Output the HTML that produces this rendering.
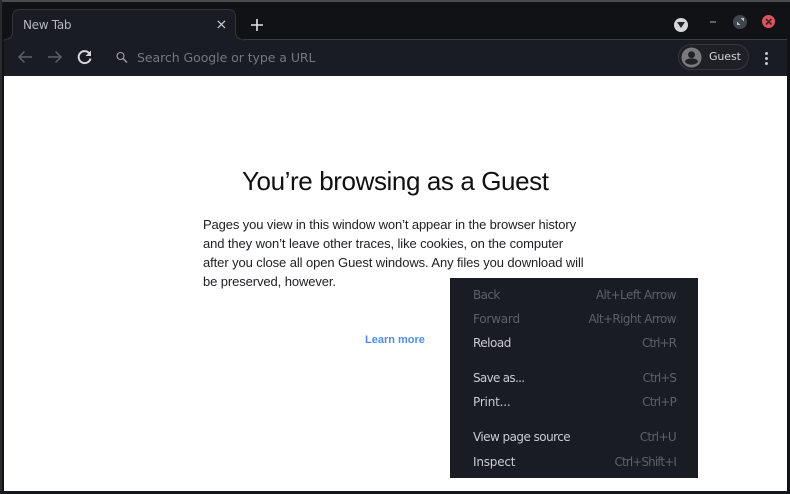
<!DOCTYPE html>
<html><head><meta charset="utf-8">
<style>
html,body{margin:0;padding:0;background:#0f1014;}
#w{position:relative;width:790px;height:494px;overflow:hidden;background:#111216;font-family:"DejaVu Sans","Liberation Sans",sans-serif;}
.a{position:absolute;white-space:nowrap;}
.r{font-family:"Liberation Sans",sans-serif;color:#202124;font-size:13px;line-height:19px;left:203px;letter-spacing:-.1px;}
.m{font-size:12px;line-height:16px;color:#c9cbd0;left:473px;letter-spacing:-.35px;}
.d{color:#5d6066;}
.k{font-size:12px;line-height:16px;color:#5d6066;right:114px;letter-spacing:-.5px;}
</style></head><body>
<div id="w">
<div class="a" style="left:0;top:0;width:790px;height:2px;background:#4a4b4d"></div>
<div class="a" style="left:0;top:0;width:2px;height:494px;background:#2a2b2e"></div>
<div class="a" style="left:0;top:491px;width:790px;height:3px;background:#17181b"></div>
<!-- toolbar -->
<div class="a" style="left:4px;top:39px;width:783px;height:37px;background:#1a1c23"></div>
<div class="a" style="left:240px;top:39px;width:547px;height:1px;background:#3a3b40"></div>
<div class="a" style="left:4px;top:39px;width:9px;height:1px;background:#3a3b40"></div>
<!-- tab -->
<svg class="a" style="left:4px;top:8px" width="240" height="33">
<path d="M0 31.5C6 31.5 8.500 29 8.500 24V9C8.500 4 11 1.500 16 1.500H224C229 1.500 231.500 4 231.500 9V24C231.500 29 234 31.500 240 31.500V33H0Z" fill="#1a1c23" stroke="#33353b" stroke-width="1"/>
<rect x="1" y="31.500" width="238" height="2" fill="#1a1c23"/>
</svg>
<div class="a" style="left:23px;top:17px;font-size:12px;line-height:16px;color:#b4b6bb;letter-spacing:-.3px">New Tab</div>
<svg class="a" style="left:216px;top:19px" width="11" height="11"><path d="M1.800 1.800L9 9M9 1.800L1.800 9" stroke="#d0d1d4" stroke-width="1.200"/></svg>
<svg class="a" style="left:250px;top:18px" width="14" height="14"><path d="M7 1V13M1 7H13" stroke="#e3e4e6" stroke-width="1.600"/></svg>
<!-- nav -->
<svg class="a" style="left:16px;top:49px" width="18" height="16"><path d="M16 8H3M8.500 2.500L3 8L8.500 13.500" fill="none" stroke="#5e6066" stroke-width="1.500"/></svg>
<svg class="a" style="left:46px;top:49px" width="18" height="16"><path d="M2 8H15M9.500 2.500L15 8L9.500 13.500" fill="none" stroke="#5e6066" stroke-width="1.500"/></svg>
<svg class="a" style="left:76px;top:49px" width="17" height="16"><path d="M13.300 4.300A6 6 0 1 0 14.500 9.500" fill="none" stroke="#d5d6d9" stroke-width="2"/><path d="M15 1.500V7H9.500Z" fill="#d5d6d9"/></svg>
<svg class="a" style="left:115px;top:51px" width="14" height="14"><circle cx="5.500" cy="5" r="3.500" fill="none" stroke="#a0a2a7" stroke-width="1.100"/><path d="M8 7.500L12 11.500" stroke="#a0a2a7" stroke-width="1.300"/></svg>
<div class="a" style="left:137px;top:50px;font-size:12.500px;line-height:16px;color:#75777d;letter-spacing:-.06px">Search Google or type a URL</div>
<!-- window buttons -->
<div class="a" style="left:674px;top:18px;width:14px;height:14px;border-radius:50%;background:#d6d7d9"></div>
<svg class="a" style="left:677px;top:22px" width="8" height="6"><path d="M0 0H8L4 6Z" fill="#22242a"/></svg>
<div class="a" style="left:710px;top:21px;width:6px;height:2px;background:#5d6068"></div>
<div class="a" style="left:733px;top:15px;width:14px;height:14px;border-radius:50%;background:#41454e"></div>
<svg class="a" style="left:736px;top:17px" width="9" height="9"><path d="M1 8V4.500L4.500 8ZM8 1V4.500L4.500 1Z" fill="#c0c2c6"/></svg>
<div class="a" style="left:762px;top:15px;width:13px;height:13px;border-radius:50%;background:#e0525f"></div>
<svg class="a" style="left:765px;top:18px" width="8" height="8"><path d="M1 1L6.500 6.500M6.500 1L1 6.500" stroke="#35232a" stroke-width="1.600"/></svg>
<!-- guest -->
<div class="a" style="left:678px;top:44px;width:69px;height:24px;border:1px solid #34363b;border-radius:14px;background:#1e2025"></div>
<svg class="a" style="left:681px;top:47px" width="21" height="21" viewBox="0 0 22 22"><circle cx="11" cy="11" r="10.500" fill="#77797c"/><circle cx="11" cy="8" r="3.600" fill="#202226"/><path d="M4 15.500C5 12.500 8 12 11 12C14 12 17 12.500 18 15.500C16.500 17.500 14 18.500 11 18.500C8 18.500 5.500 17.500 4 15.500Z" fill="#202226"/></svg>
<div class="a" style="left:709px;top:49px;font-size:11px;line-height:16px;color:#d4d5d8;letter-spacing:-.1px">Guest</div>
<div class="a" style="left:765px;top:52px;width:3px;height:3px;border-radius:50%;background:#c4c5c8"></div>
<div class="a" style="left:765px;top:57px;width:3px;height:3px;border-radius:50%;background:#c4c5c8"></div>
<div class="a" style="left:765px;top:62px;width:3px;height:3px;border-radius:50%;background:#c4c5c8"></div>
<!-- page -->
<div class="a" style="left:4px;top:76px;width:783px;height:415px;background:#fff"></div>
<div class="a" style="left:242px;top:165px;font-family:'Liberation Sans',sans-serif;font-size:26px;line-height:32px;color:#111;letter-spacing:-.4px">You’re browsing as a Guest</div>
<div class="a r" style="top:215px;letter-spacing:-.12px">Pages you view in this window won’t appear in the browser history</div>
<div class="a r" style="top:234px;letter-spacing:-.1px">and they won’t leave other traces, like cookies, on the computer</div>
<div class="a r" style="top:253px;letter-spacing:-.09px">after you close all open Guest windows. Any files you download will</div>
<div class="a r" style="top:272px">be preserved, however.</div>
<div class="a" style="left:365px;top:333px;font-family:'Liberation Sans',sans-serif;font-weight:bold;font-size:11px;line-height:14px;color:#4f8cf0">Learn more</div>
<!-- menu -->
<div class="a" style="left:450px;top:278px;width:248px;height:200px;background:#1a1c23"></div>
<div class="a m d" style="top:287px;letter-spacing:-.6px">Back</div><div class="a k" style="top:287px;letter-spacing:-.52px">Alt+Left Arrow</div>
<div class="a m d" style="top:311px;letter-spacing:-.2px">Forward</div><div class="a k" style="top:311px;letter-spacing:-.6px">Alt+Right Arrow</div>
<div class="a m" style="top:335px;letter-spacing:-.5px">Reload</div><div class="a k" style="top:335px;letter-spacing:-.95px">Ctrl+R</div>
<div class="a m" style="top:370px;letter-spacing:-.7px">Save as...</div><div class="a k" style="top:370px;letter-spacing:-.95px">Ctrl+S</div>
<div class="a m" style="top:394px;letter-spacing:-.2px">Print...</div><div class="a k" style="top:394px;letter-spacing:-.8px">Ctrl+P</div>
<div class="a m" style="top:429px;letter-spacing:-.55px">View page source</div><div class="a k" style="top:429px;letter-spacing:-.65px">Ctrl+U</div>
<div class="a m" style="top:454px;letter-spacing:-.2px">Inspect</div><div class="a k" style="top:454px;letter-spacing:-.9px">Ctrl+Shift+I</div>
</div>
</body></html>
